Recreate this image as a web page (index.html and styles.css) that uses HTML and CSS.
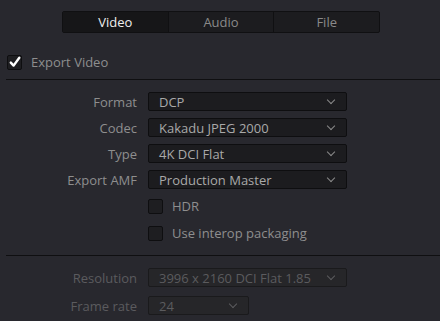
FILE: index.html
```html
<!DOCTYPE html>
<html lang="en">
<head>
  <meta charset="UTF-8" />
  <title>Render Settings</title>
  <link rel="stylesheet" href="styles.css">
</head>
<body>
  <div class="tabs">
    <div class="tab active">Video</div>
    <div class="tab">Audio</div>
    <div class="tab">File</div>
  </div>

  <label class="check-row top">
    <span class="box checked">
      <svg width="12" height="12" viewBox="0 0 12 12"><path d="M1.8 6.6 L4.6 9.6 L10.3 1.8" fill="none" stroke="#fff" stroke-width="2.4" stroke-linecap="round" stroke-linejoin="round"/></svg>
    </span>
    Export Video
  </label>

  <div class="divider"></div>

  <div class="form">
    <div class="label">Format</div>
    <div class="select"><span>DCP</span><i class="chev"></i></div>

    <div class="label">Codec</div>
    <div class="select"><span>Kakadu JPEG 2000</span><i class="chev"></i></div>

    <div class="label">Type</div>
    <div class="select"><span>4K DCI Flat</span><i class="chev"></i></div>

    <div class="label">Export AMF</div>
    <div class="select"><span>Production Master</span><i class="chev"></i></div>

    <div></div>
    <label class="check-row"><span class="box"></span>HDR</label>

    <div></div>
    <label class="check-row"><span class="box"></span>Use interop packaging</label>
  </div>

  <div class="divider second"></div>

  <div class="form disabled">
    <div class="label">Resolution</div>
    <div class="select"><span>3996 x 2160 DCI Flat 1.85</span><i class="chev"></i></div>

    <div class="label">Frame rate</div>
    <div class="select small"><span>24</span><i class="chev"></i></div>
  </div>
</body>
</html>
```

FILE: styles.css
```css
body {
  margin: 0;
  background-color: #28282e;
  font-family: "Open Sans", "Noto Sans", sans-serif;
  font-size: 13px;
  color: #8e8e8e;
  overflow: hidden;
}

.tabs {
  display: flex;
  width: 318px;
  height: 22px;
  margin: 11px 0 0 62px;
  box-sizing: border-box;
  border: 1px solid #101012;
  border-radius: 2px;
  background-color: #1c1c1f;
}

.tab {
  flex: 1;
  display: flex;
  justify-content: center;
  align-items: center;
  color: #8a8a8a;
  border-left: 1px solid #101012;
}

.tab:first-child {
  border-left: none;
}

.tab.active {
  background-color: #161618;
  color: #eeeeee;
}

.check-row {
  display: flex;
  align-items: center;
  gap: 9px;
  height: 20px;
  color: #8e8e8e;
}

.check-row.top {
  margin: 19px 0 0 7px;
}

.box {
  width: 13px;
  height: 13px;
  border: 1px solid #0e0e10;
  border-radius: 2px;
  background-color: #1e1e21;
  display: flex;
  justify-content: center;
  align-items: center;
}

.divider {
  height: 1px;
  background-color: #0f0f11;
  margin: 7px 0 0 6px;
}

.form {
  display: grid;
  grid-template-columns: 137px 199px;
  column-gap: 11px;
  row-gap: 7px;
  align-items: center;
  margin-top: 12px;
}

.label {
  text-align: right;
}

.select {
  height: 19px;
  box-sizing: border-box;
  border: 1px solid #0e0e10;
  border-radius: 2px;
  background-color: #1c1c1f;
  color: #a9a9a9;
  display: flex;
  align-items: center;
  justify-content: space-between;
  padding: 0 12px 0 10px;
}

.select.small {
  width: 101px;
}

.chev {
  width: 5px;
  height: 5px;
  border-right: 1.5px solid #8a8a8a;
  border-bottom: 1.5px solid #8a8a8a;
  transform: rotate(45deg);
  margin-top: -3px;
}

.form .check-row {
  height: 20px;
}

.divider.second {
  margin-top: 12px;
}

.form.disabled {
  margin-top: 12px;
  row-gap: 9px;
}

.form.disabled .label {
  color: #5b5b5e;
}

.form.disabled .select {
  background-color: #262629;
  border-color: #1a1a1c;
  color: #5b5b5e;
}

.form.disabled .chev {
  border-color: #5b5b5e;
}
```
